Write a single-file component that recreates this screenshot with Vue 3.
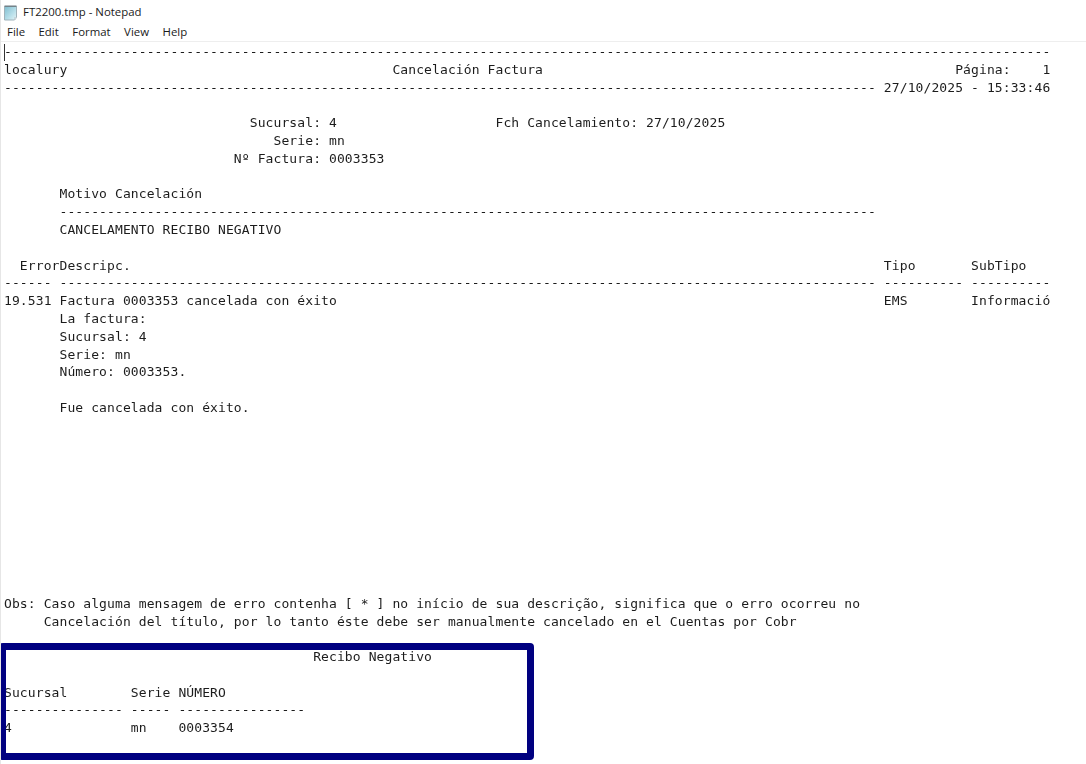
<script setup>
const d = (n) => '-'.repeat(n)
const s = (n) => ' '.repeat(n)
const lines = [
  d(132),
  'localury' + s(41) + 'Cancelación Factura' + s(52) + 'Página:    1',
  d(110) + ' 27/10/2025 - 15:33:46',
  '',
  s(31) + 'Sucursal: 4' + s(20) + 'Fch Cancelamiento: 27/10/2025',
  s(34) + 'Serie: mn',
  s(29) + 'Nº Factura: 0003353',
  '',
  s(7) + 'Motivo Cancelación',
  s(7) + d(103),
  s(7) + 'CANCELAMENTO RECIBO NEGATIVO',
  '',
  s(2) + 'ErrorDescripc.' + s(95) + 'Tipo' + s(7) + 'SubTipo',
  d(6) + ' ' + d(103) + ' ' + d(10) + ' ' + d(10),
  '19.531 Factura 0003353 cancelada con éxito' + s(69) + 'EMS' + s(8) + 'Informació',
  s(7) + 'La factura:',
  s(7) + 'Sucursal: 4',
  s(7) + 'Serie: mn',
  s(7) + 'Número: 0003353.',
  '',
  s(7) + 'Fue cancelada con éxito.',
  '', '', '', '', '', '', '', '', '', '',
  'Obs: Caso alguma mensagem de erro contenha [ * ] no início de sua descrição, significa que o erro ocorreu no',
  s(5) + 'Cancelación del título, por lo tanto éste debe ser manualmente cancelado en el Cuentas por Cobr',
  '',
  s(39) + 'Recibo Negativo',
  '',
  'Sucursal' + s(8) + 'Serie NÚMERO',
  d(15) + ' ' + d(5) + ' ' + d(16),
  '4' + s(15) + 'mn' + s(4) + '0003354',
]
const menus = ['File', 'Edit', 'Format', 'View', 'Help']
</script>

<template>
  <div class="window">
    <header class="title">
      <svg class="icon" width="17" height="18" viewBox="0 0 17 18">
        <defs>
          <linearGradient id="page" x1="0" y1="0" x2="1" y2="1">
            <stop offset="0" stop-color="#7fbdcf" />
            <stop offset="0.6" stop-color="#b9e0ea" />
            <stop offset="1" stop-color="#e4f4f7" />
          </linearGradient>
        </defs>
        <path d="M2.5 3.5h12v11l-2 2.5h-10z" fill="url(#page)" stroke="#9fb2ba" />
        <path d="M2.5 3.2h12" stroke="#6f7d84" stroke-width="1.4" />
        <path d="M14.5 14.5l-2 2.5v-2.5z" fill="#eef6f8" stroke="#b5c4ca" stroke-width="0.6" />
      </svg>
      <span>FT2200.tmp - Notepad</span>
    </header>
    <nav class="menu">
      <span v-for="m in menus" :key="m">{{ m }}</span>
    </nav>
    <main class="editor">
      <i class="caret"></i>
      <pre class="text">{{ lines.join('\n') }}</pre>
    </main>
    <div class="highlight"></div>
  </div>
</template>

<style>
html, body { margin: 0; background: #fff; overflow: hidden; }
</style>

<style scoped>
.window {
  position: relative;
  width: 1086px;
  height: 764px;
  overflow: hidden;
  background: #fff;
  color: #1a1a1a;
  font-family: "Open Sans", "Noto Sans", sans-serif;
  box-sizing: border-box;
  border-left: 1px solid #e6e6e6;
}
.title {
  display: flex;
  align-items: center;
  gap: 4px;
  height: 23px;
  padding-left: 1px;
  font-size: 11.4px;
}
.icon { flex: none; }
.menu {
  display: flex;
  gap: 13.5px;
  height: 16px;
  align-items: center;
  padding: 0 0 2px 6px;
  font-size: 11.4px;
  border-bottom: 1px solid #eeeeee;
}
.editor {
  position: relative;
  padding: 1px 0 0 3px;
}
.caret {
  position: absolute;
  left: 3px;
  top: 2px;
  width: 1px;
  height: 17px;
  background: #333;
}
.text {
  margin: 0;
  font-family: "DejaVu Sans Mono", monospace;
  font-size: 13px;
  letter-spacing: 0.1px;
  line-height: 17.79px;
  color: #1c1c1c;
  filter: blur(0.3px);
}
.highlight {
  position: absolute;
  left: -2px;
  top: 643px;
  width: 535px;
  height: 117px;
  box-sizing: border-box;
  border: 7px solid #000080;
  border-radius: 4px;
}
</style>
